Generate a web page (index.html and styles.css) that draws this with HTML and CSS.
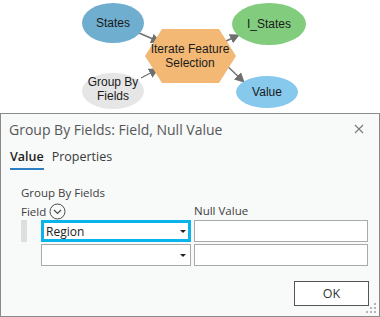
FILE: index.html
```html
<!DOCTYPE html>
<html lang="en">
<head>
    <meta charset="UTF-8">
    <title>Group By Fields</title>
    <link rel="stylesheet" href="styles.css">
</head>
<body>
    <div class="model">
        <svg class="model-canvas" width="380" height="113" viewBox="0 0 380 113">
            <defs>
                <marker id="arrow" viewBox="0 0 10 10" refX="9" refY="5" markerWidth="10" markerHeight="10" markerUnits="userSpaceOnUse" orient="auto">
                    <path d="M0,0 L10,5 L0,10 z" fill="#6f6f6f"/>
                </marker>
            </defs>
            <line x1="139" y1="33" x2="160" y2="42" class="link" marker-end="url(#arrow)"/>
            <line x1="141" y1="78" x2="158" y2="69" class="link" marker-end="url(#arrow)"/>
            <line x1="224" y1="42" x2="239" y2="35" class="link" marker-end="url(#arrow)"/>
            <line x1="222" y1="61" x2="244" y2="82" class="link" marker-end="url(#arrow)"/>

            <ellipse cx="113" cy="23" rx="31" ry="20" fill="#70aecf"/>
            <text x="113" y="27" class="node-label">States</text>

            <ellipse cx="113" cy="91" rx="31" ry="18" fill="#e6e6e6"/>
            <text x="113" y="86" class="node-label">Group By</text>
            <text x="113" y="100" class="node-label">Fields</text>

            <polygon points="145,56 162,29 219,29 236,56 219,83 162,83" fill="#f2b874"/>
            <text x="190" y="53" class="node-label">Iterate Feature</text>
            <text x="190" y="67" class="node-label">Selection</text>

            <ellipse cx="269" cy="24" rx="37" ry="21" fill="#82cc7d"/>
            <text x="269" y="28" class="node-label">I_States</text>

            <ellipse cx="267" cy="92" rx="31" ry="16" fill="#86c9ed"/>
            <text x="267" y="96" class="node-label">Value</text>
        </svg>
    </div>

    <div class="dialog">
        <div class="dialog-header">
            <span class="dialog-title">Group By Fields: Field, Null Value</span>
            <svg class="close-icon" width="10" height="10" viewBox="0 0 10 10">
                <path d="M1,1 L9,9 M9,1 L1,9" stroke="#7a7a7a" stroke-width="1.1" fill="none"/>
            </svg>
        </div>

        <div class="tabs">
            <span class="tab active">Value</span>
            <span class="tab">Properties</span>
        </div>

        <div class="panel">
            <div class="group-label">Group By Fields</div>
            <div class="value-table">
                <div class="table-head">
                    <div class="head-field">
                        Field
                        <svg class="expand-icon" width="17" height="17" viewBox="0 0 17 17">
                            <circle cx="8.5" cy="8.5" r="7.5" stroke="#4a4a4a" stroke-width="1" fill="none"/>
                            <path d="M5,7 L8.5,10.5 L12,7" stroke="#4a4a4a" stroke-width="1.2" fill="none"/>
                        </svg>
                    </div>
                    <div class="head-null">Null Value</div>
                </div>
                <div class="table-row">
                    <div class="row-handle selected"></div>
                    <div class="combo focused">
                        <span class="combo-text">Region</span>
                        <span class="combo-arrow"></span>
                    </div>
                    <div class="text-box"></div>
                </div>
                <div class="table-row">
                    <div class="row-handle"></div>
                    <div class="combo">
                        <span class="combo-text"></span>
                        <span class="combo-arrow"></span>
                    </div>
                    <div class="text-box"></div>
                </div>
            </div>
        </div>

        <div class="dialog-footer">
            <button class="ok-btn">OK</button>
        </div>

        <svg class="grip" width="10" height="10" viewBox="0 0 10 10">
            <rect x="8" y="0" width="2" height="2" fill="#b5b5b5"/>
            <rect x="4" y="4" width="2" height="2" fill="#b5b5b5"/>
            <rect x="8" y="4" width="2" height="2" fill="#b5b5b5"/>
            <rect x="0" y="8" width="2" height="2" fill="#b5b5b5"/>
            <rect x="4" y="8" width="2" height="2" fill="#b5b5b5"/>
            <rect x="8" y="8" width="2" height="2" fill="#b5b5b5"/>
        </svg>
    </div>
</body>
</html>
```

FILE: styles.css
```css
body {
    margin: 0;
    width: 380px;
    height: 317px;
    overflow: hidden;
    background: #ffffff;
    font-family: 'Open Sans', 'Noto Sans', sans-serif;
}

/* Model diagram */
.model {
    height: 113px;
}

.model-canvas {
    display: block;
}

.link {
    stroke: #707070;
    stroke-width: 1.4;
}

.node-label {
    font-family: 'Liberation Sans', Arial, sans-serif;
    font-size: 12px;
    fill: #1a1a1a;
    text-anchor: middle;
}

/* Dialog */
.dialog {
    position: relative;
    height: 204px;
    box-sizing: border-box;
    border: 1px solid #8a8a8a;
    background: #f8f9f9;
    display: flex;
    flex-direction: column;
}

.dialog-header {
    display: flex;
    align-items: center;
    justify-content: space-between;
    padding: 4px 15px 0 8px;
    height: 22px;
}

.dialog-title {
    font-size: 14px;
    color: #575757;
}

.close-icon {
    display: block;
}

.tabs {
    display: flex;
    gap: 8px;
    padding: 8px 0 0 9px;
}

.tab {
    font-size: 12.5px;
    color: #3a3a3a;
    padding-bottom: 3px;
    border-bottom: 2px solid transparent;
}

.tab.active {
    color: #1e1e1e;
    font-weight: 600;
    border-bottom-color: #2f7ec4;
}

.panel {
    padding: 15px 11px 0 20px;
}

.group-label {
    font-size: 11.5px;
    color: #404040;
    line-height: 16px;
}

.table-head {
    display: flex;
    align-items: flex-end;
    height: 19px;
}

.head-field {
    width: 173px;
    display: flex;
    align-items: center;
    gap: 3px;
    font-size: 11.5px;
    color: #404040;
}

.head-null {
    font-size: 11.5px;
    color: #404040;
    padding-bottom: 2px;
}

.table-row {
    display: flex;
    height: 22px;
    margin-top: 2px;
}

.table-head + .table-row {
    margin-top: 0;
}

.row-handle {
    width: 6px;
    margin-right: 14px;
}

.row-handle.selected {
    background: #dedede;
}

.combo {
    width: 150px;
    box-sizing: border-box;
    border: 1px solid #a9a9a9;
    background: #ffffff;
    display: flex;
    align-items: center;
    justify-content: space-between;
    padding: 0 4px 0 4px;
}

.combo.focused {
    border: 3px solid #09b4ec;
    padding: 0 2px 0 2px;
}

.combo-text {
    font-size: 12px;
    color: #222222;
}

.combo-arrow {
    width: 0;
    height: 0;
    border-left: 3px solid transparent;
    border-right: 3px solid transparent;
    border-top: 3px solid #222222;
}

.text-box {
    width: 174px;
    margin-left: 3px;
    box-sizing: border-box;
    border: 1px solid #a9a9a9;
    background: #ffffff;
}

.dialog-footer {
    display: flex;
    justify-content: flex-end;
    padding: 15px 10px 0 0;
}

.ok-btn {
    width: 75px;
    height: 25px;
    border: 1px solid #555555;
    background: #ffffff;
    font-family: 'Open Sans', 'Noto Sans', sans-serif;
    font-size: 12.5px;
    color: #333333;
    padding: 0;
}

.grip {
    position: absolute;
    right: 3px;
    bottom: 3px;
}
```
